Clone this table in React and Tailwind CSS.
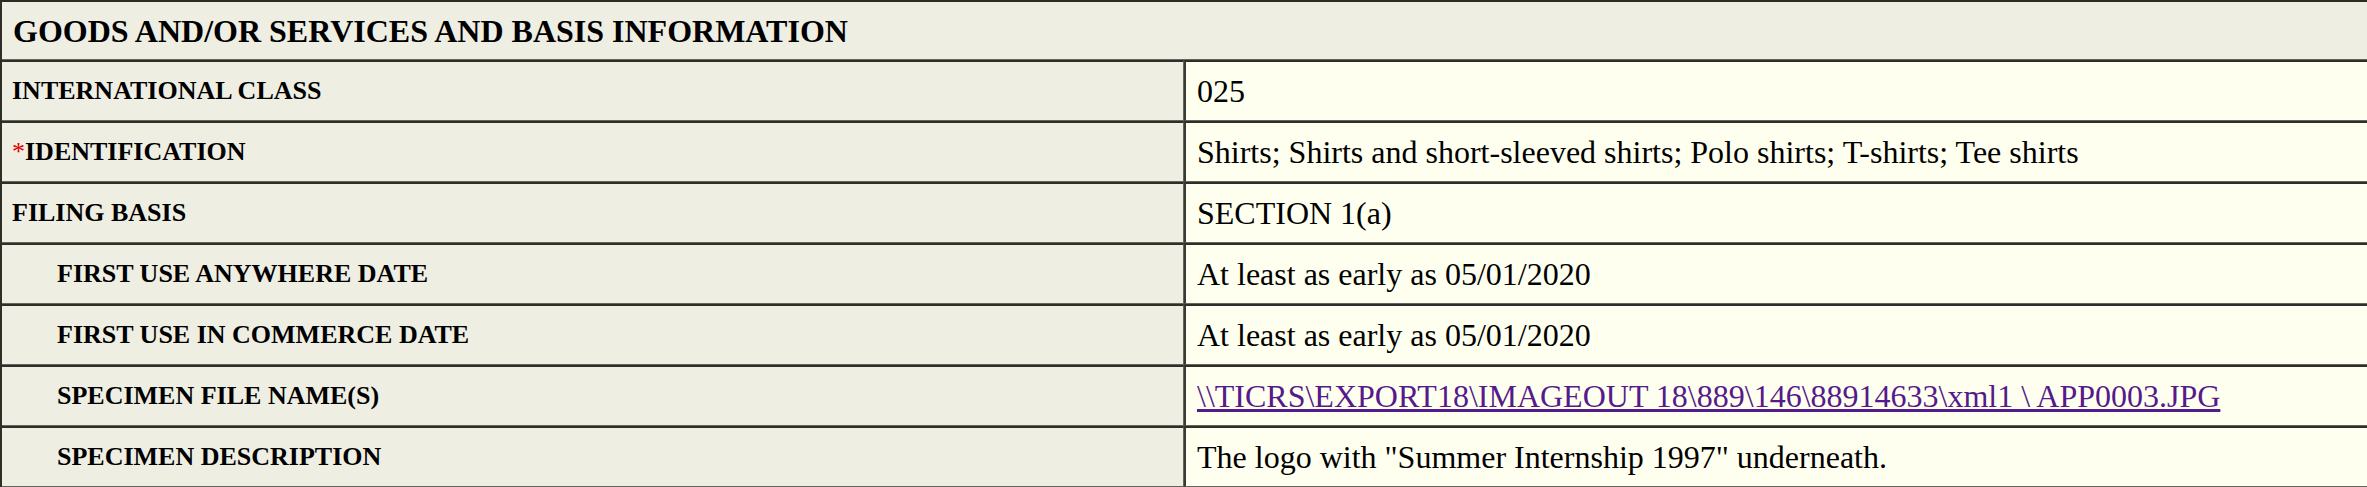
const rows = [
  { label: "INTERNATIONAL CLASS", value: "025" },
  {
    label: "IDENTIFICATION",
    required: true,
    value: "Shirts; Shirts and short-sleeved shirts; Polo shirts; T-shirts; Tee shirts",
  },
  { label: "FILING BASIS", value: "SECTION 1(a)" },
  { label: "FIRST USE ANYWHERE DATE", indent: true, value: "At least as early as 05/01/2020" },
  { label: "FIRST USE IN COMMERCE DATE", indent: true, value: "At least as early as 05/01/2020" },
  {
    label: "SPECIMEN FILE NAME(S)",
    indent: true,
    link: true,
    value: "\\\\TICRS\\EXPORT18\\IMAGEOUT 18\\889\\146\\88914633\\xml1 \\ APP0003.JPG",
  },
  {
    label: "SPECIMEN DESCRIPTION",
    indent: true,
    value: 'The logo with "Summer Internship 1997" underneath.',
  },
];

export default function App() {
  return (
    <div
      className="w-[2367px] h-[487px] overflow-hidden bg-[#fffff0] text-black"
      style={{ fontFamily: '"Liberation Serif", "Times New Roman", serif' }}
    >
      <div className="border-l-2 border-[#2f2f29]">
        {/* section header */}
        <div className="h-[60px] flex items-center bg-[#efeee3] border-t-2 border-b border-t-[#2b2b24] border-b-[#65655e] pl-[11px]">
          <span className="text-[32px] font-bold leading-none">
            GOODS AND/OR SERVICES AND BASIS INFORMATION
          </span>
        </div>

        {rows.map((row) => (
          <div key={row.label} className="grid grid-cols-[1182px_1fr] h-[61px]">
            <div
              className={`flex items-center bg-[#efeee3] border-t-2 border-b border-r border-t-[#2f2f29] border-b-[#65655e] border-r-[#65655e] ${
                row.indent ? "pl-[55px]" : "pl-[10px]"
              }`}
            >
              <span className="text-[26px] font-bold leading-none">
                {row.required && (
                  <span className="text-[#dd0000] font-normal">*</span>
                )}
                {row.label}
              </span>
            </div>
            <div className="flex items-center bg-[#fffff0] border-t-2 border-b border-l-2 border-t-[#2f2f29] border-b-[#65655e] border-l-[#3a3a34] pl-[11px]">
              {row.link ? (
                <a href="#" className="text-[32px] leading-none text-[#551a8b] underline">
                  {row.value}
                </a>
              ) : (
                <span className="text-[32px] leading-none">{row.value}</span>
              )}
            </div>
          </div>
        ))}
      </div>
    </div>
  );
}
